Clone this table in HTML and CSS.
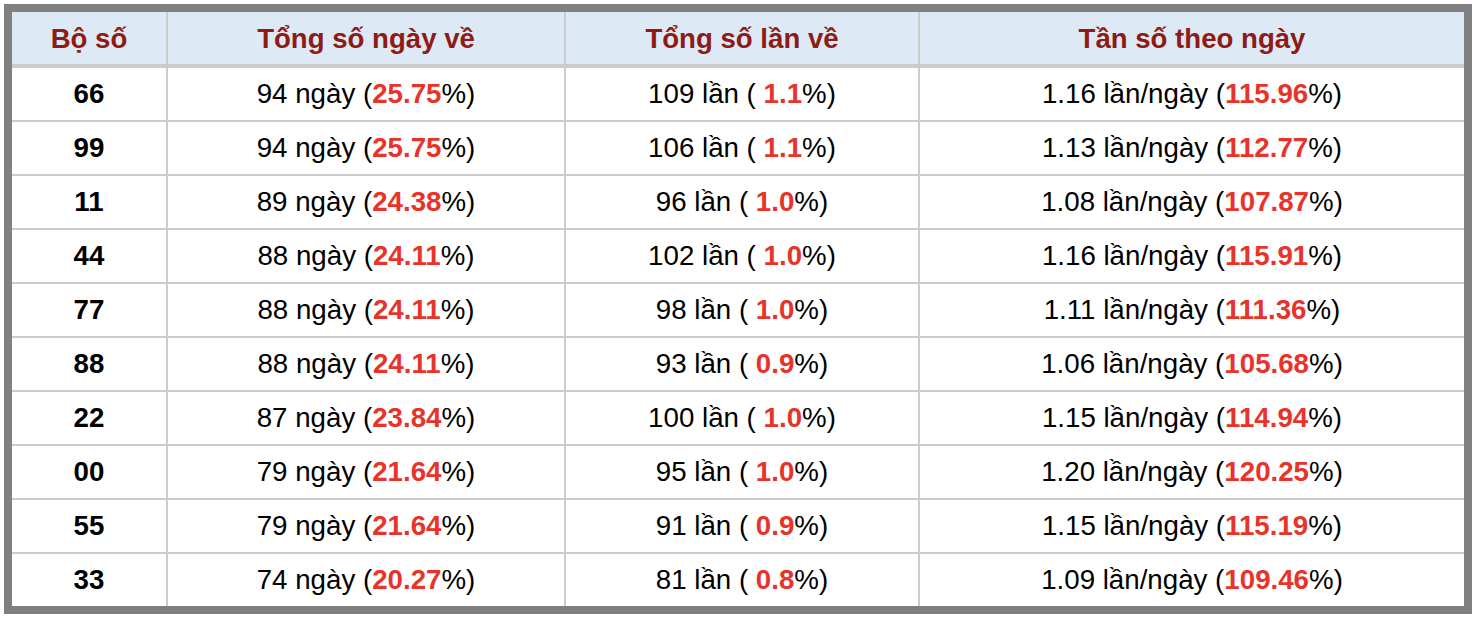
FILE: index.html
```html
<!DOCTYPE html>
<html lang="vi">
<head>
<meta charset="utf-8">
<title>Thống kê bộ số</title>
<link rel="stylesheet" href="styles.css">
</head>
<body>
<div class="stats" role="table">
  <div class="cell head">Bộ số</div>
  <div class="cell head">Tổng số ngày về</div>
  <div class="cell head">Tổng số lần về</div>
  <div class="cell head">Tần số theo ngày</div>

  <div class="cell num">66</div>
  <div class="cell">94 ngày (<b>25.75</b>%)</div>
  <div class="cell">109 lần ( <b>1.1</b>%)</div>
  <div class="cell">1.16 lần/ngày (<b>115.96</b>%)</div>

  <div class="cell num">99</div>
  <div class="cell">94 ngày (<b>25.75</b>%)</div>
  <div class="cell">106 lần ( <b>1.1</b>%)</div>
  <div class="cell">1.13 lần/ngày (<b>112.77</b>%)</div>

  <div class="cell num">11</div>
  <div class="cell">89 ngày (<b>24.38</b>%)</div>
  <div class="cell">96 lần ( <b>1.0</b>%)</div>
  <div class="cell">1.08 lần/ngày (<b>107.87</b>%)</div>

  <div class="cell num">44</div>
  <div class="cell">88 ngày (<b>24.11</b>%)</div>
  <div class="cell">102 lần ( <b>1.0</b>%)</div>
  <div class="cell">1.16 lần/ngày (<b>115.91</b>%)</div>

  <div class="cell num">77</div>
  <div class="cell">88 ngày (<b>24.11</b>%)</div>
  <div class="cell">98 lần ( <b>1.0</b>%)</div>
  <div class="cell">1.11 lần/ngày (<b>111.36</b>%)</div>

  <div class="cell num">88</div>
  <div class="cell">88 ngày (<b>24.11</b>%)</div>
  <div class="cell">93 lần ( <b>0.9</b>%)</div>
  <div class="cell">1.06 lần/ngày (<b>105.68</b>%)</div>

  <div class="cell num">22</div>
  <div class="cell">87 ngày (<b>23.84</b>%)</div>
  <div class="cell">100 lần ( <b>1.0</b>%)</div>
  <div class="cell">1.15 lần/ngày (<b>114.94</b>%)</div>

  <div class="cell num">00</div>
  <div class="cell">79 ngày (<b>21.64</b>%)</div>
  <div class="cell">95 lần ( <b>1.0</b>%)</div>
  <div class="cell">1.20 lần/ngày (<b>120.25</b>%)</div>

  <div class="cell num">55</div>
  <div class="cell">79 ngày (<b>21.64</b>%)</div>
  <div class="cell">91 lần ( <b>0.9</b>%)</div>
  <div class="cell">1.15 lần/ngày (<b>115.19</b>%)</div>

  <div class="cell num">33</div>
  <div class="cell">74 ngày (<b>20.27</b>%)</div>
  <div class="cell">81 lần ( <b>0.8</b>%)</div>
  <div class="cell">1.09 lần/ngày (<b>109.46</b>%)</div>
</div>
</body>
</html>
```

FILE: styles.css
```css
html, body {
  margin: 0;
  padding: 0;
  background: #ffffff;
}

body {
  padding: 4px;
  font-family: "Liberation Sans", Arial, Helvetica, sans-serif;
}

.stats {
  box-sizing: border-box;
  width: 1468px;
  border: 8px solid #808080;
  background: #cccccc;
  display: grid;
  grid-template-columns: 154px 396px 352px 544px;
  grid-auto-rows: 52px;
  grid-template-rows: 54px;
  gap: 2px;
}

.cell {
  background: #ffffff;
  display: flex;
  align-items: center;
  justify-content: center;
  font-size: 27.7px;
  color: #000000;
  white-space: pre;
}

.cell b {
  color: #e8332a;
  font-weight: bold;
}

.head {
  background: #ddeaf6;
  color: #8e1b15;
  font-weight: bold;
  font-size: 27.6px;
  border-bottom: 2px solid #cccccc;
  padding-top: 2px;
}

.num {
  font-weight: bold;
}
```
